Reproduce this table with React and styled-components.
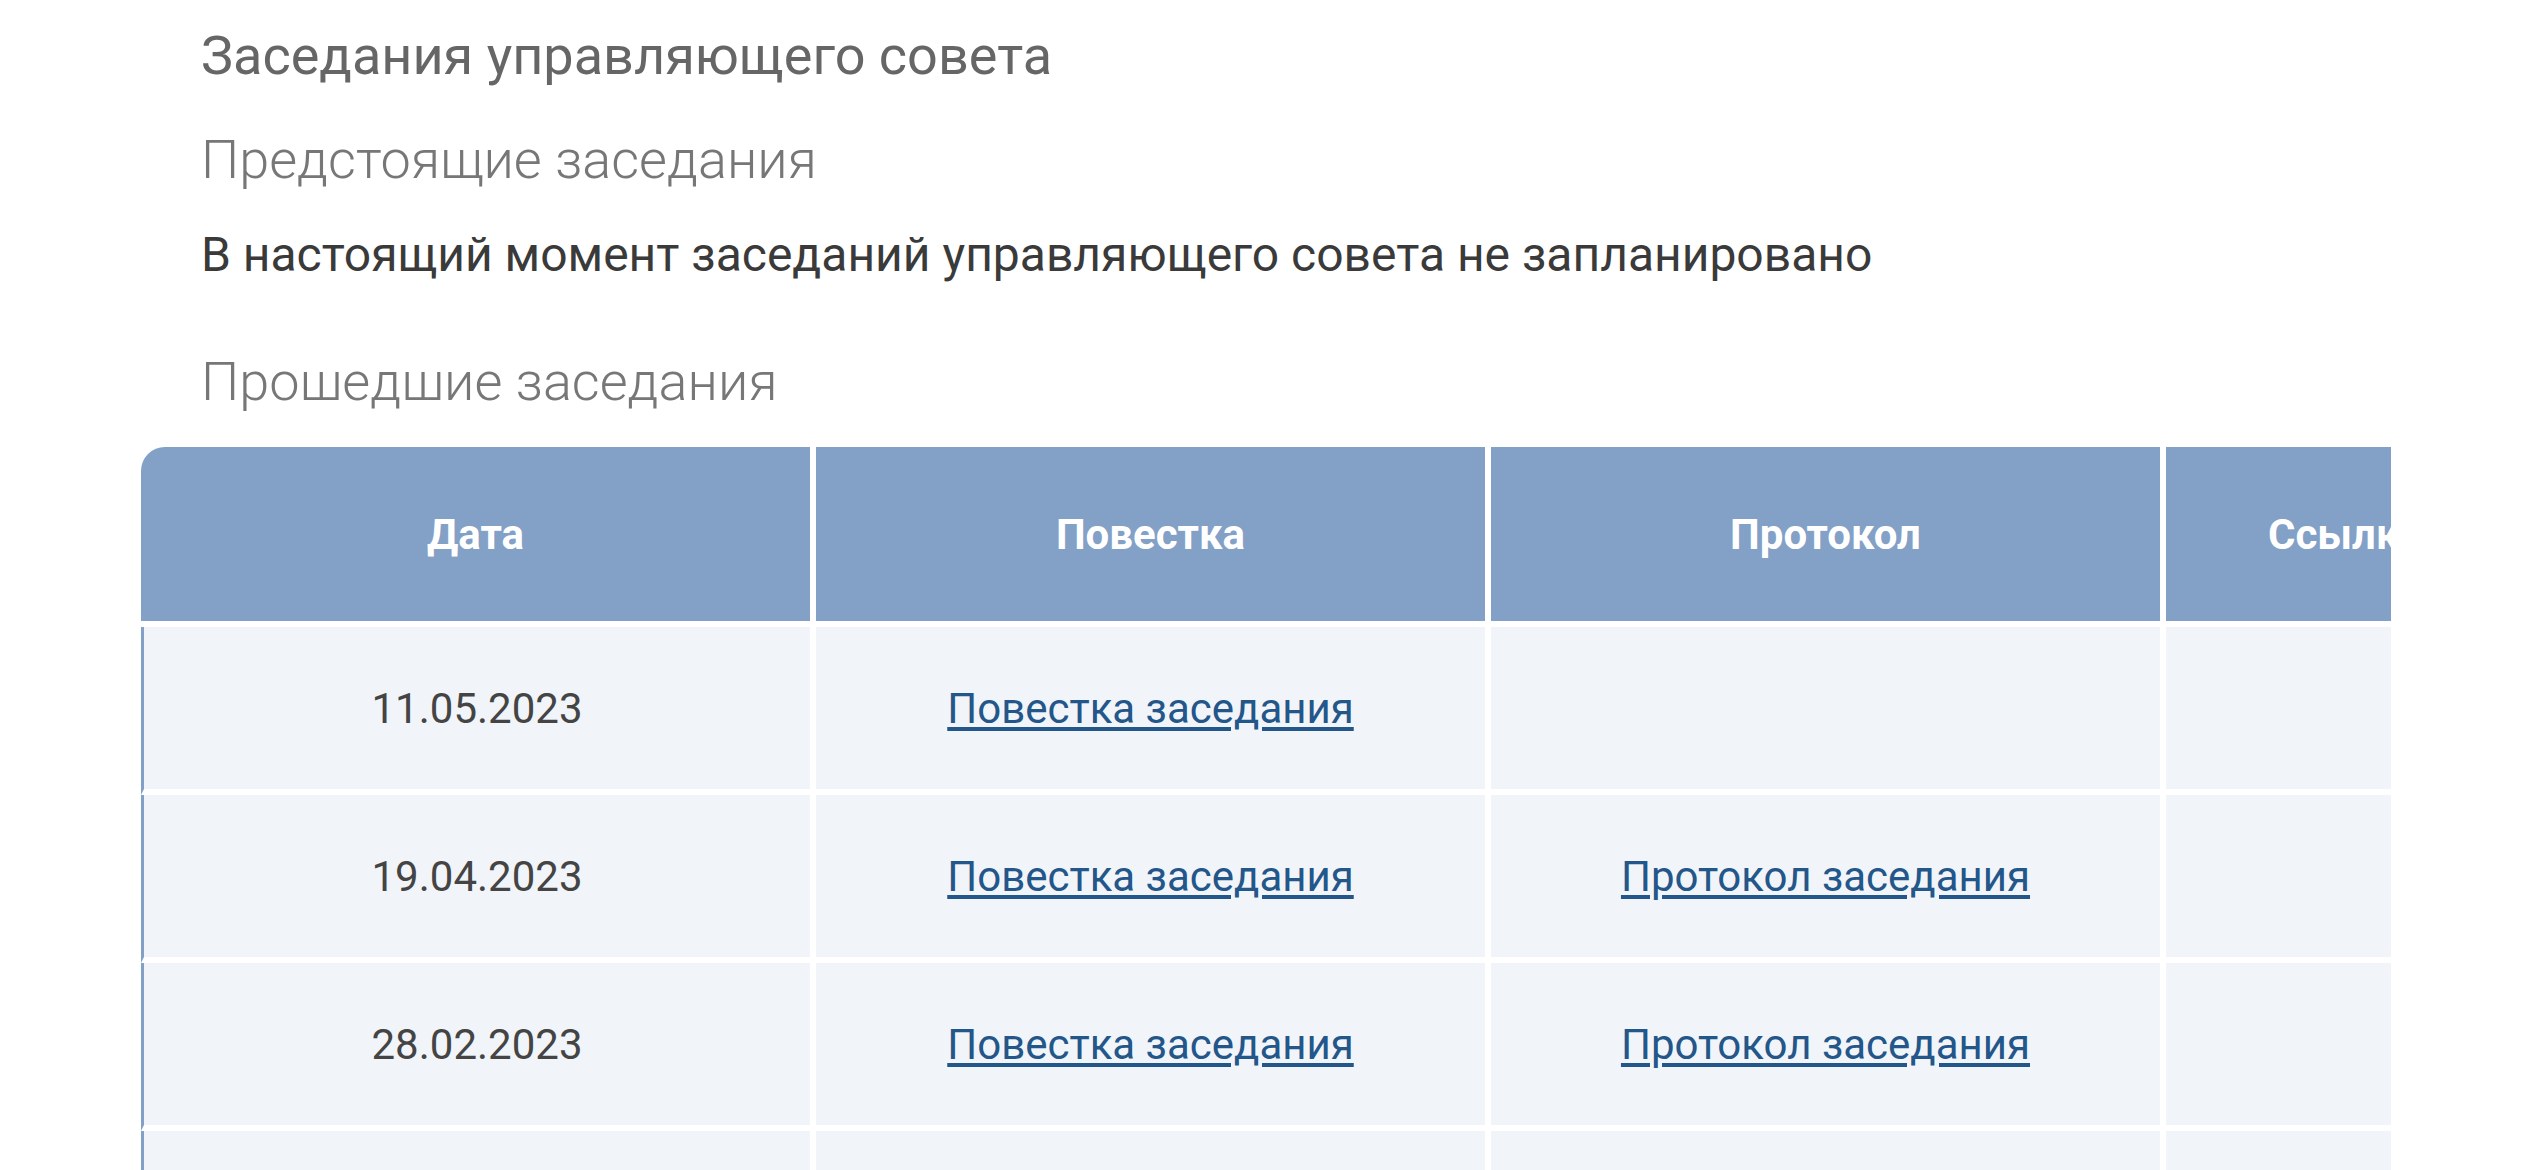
import React from "react";
import styled, { createGlobalStyle } from "styled-components";

const GlobalStyle = createGlobalStyle`
  html, body {
    margin: 0;
    padding: 0;
    overflow: hidden;
    background: #fff;
  }
  body {
    font-family: Roboto, "Liberation Sans", sans-serif;
  }
`;

const meetings = [
  { date: "11.05.2023", agenda: true, protocol: false },
  { date: "19.04.2023", agenda: true, protocol: true },
  { date: "28.02.2023", agenda: true, protocol: true },
  { date: "26.01.2023", agenda: true, protocol: true },
];

export default function App() {
  return (
    <>
      <GlobalStyle />
      <Page>
        <Title>Заседания управляющего совета</Title>
        <Subtitle>Предстоящие заседания</Subtitle>
        <Note>В настоящий момент заседаний управляющего совета не запланировано</Note>
        <Subtitle $gap>Прошедшие заседания</Subtitle>
        <TableScroll>
          <Table>
            <thead>
              <tr>
                <Th>Дата</Th>
                <Th>Повестка</Th>
                <Th>Протокол</Th>
                <Th>Ссылка на трансляцию</Th>
              </tr>
            </thead>
            <tbody>
              {meetings.map((m) => (
                <tr key={m.date}>
                  <Td>{m.date}</Td>
                  <Td>{m.agenda && <DocLink href="#">Повестка заседания</DocLink>}</Td>
                  <Td>{m.protocol && <DocLink href="#">Протокол заседания</DocLink>}</Td>
                  <Td />
                </tr>
              ))}
            </tbody>
          </Table>
        </TableScroll>
      </Page>
    </>
  );
}

const Page = styled.main`
  display: flex;
  flex-direction: column;
  padding: 20px 141px 0;
`;

const Title = styled.h2`
  margin: 0 0 0 60px;
  font-size: 54px;
  line-height: 72px;
  font-weight: 400;
  color: #666;
`;

const Subtitle = styled.h3`
  margin: ${(p) => (p.$gap ? "61px" : "32px")} 0 0 60px;
  font-size: 54px;
  line-height: 72px;
  font-weight: 300;
  color: #777;
`;

const Note = styled.p`
  margin: 29px 0 0 60px;
  font-size: 48px;
  line-height: 60px;
  color: #3a3a3a;
`;

const TableScroll = styled.div`
  margin-top: 29px;
  overflow: hidden;
`;

const Table = styled.table`
  width: 2700px;
  table-layout: fixed;
  border-collapse: separate;
  border-spacing: 0;
`;

const Th = styled.th`
  height: 174px;
  padding: 0 20px;
  background: #83a0c6;
  color: #fff;
  font-size: 42px;
  font-weight: 700;
  text-align: center;
  border-right: 6px solid #fff;
  border-bottom: 6px solid #fff;

  &:first-child {
    border-top-left-radius: 24px;
  }
`;

const Td = styled.td`
  height: 162px;
  padding: 0 20px;
  background: #f1f4f9;
  color: #444;
  font-size: 42px;
  text-align: center;
  border-right: 6px solid #fff;
  border-bottom: 6px solid #fff;

  &:first-child {
    border-left: 3px solid #83a0c6;
  }
`;

const DocLink = styled.a`
  color: #235689;
  text-decoration: underline;
  text-underline-offset: 4px;
`;
